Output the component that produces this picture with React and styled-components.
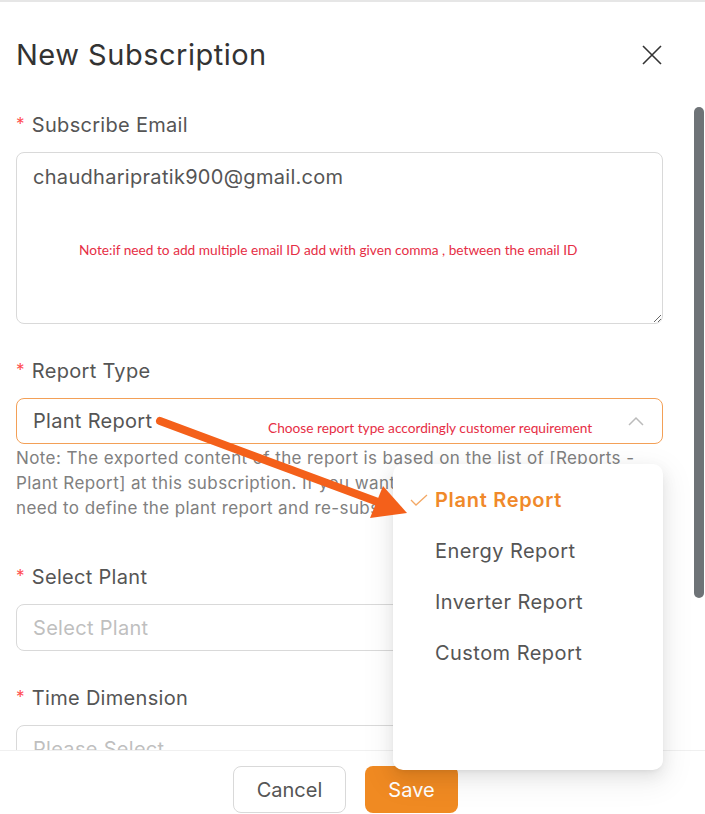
import React from "react";
import styled, { createGlobalStyle } from "styled-components";

const GlobalStyle = createGlobalStyle`
  html, body { margin: 0; padding: 0; background: #fff; }
  body { font-family: Inter, "Noto Sans", sans-serif; letter-spacing: 0.3px; }
  * { box-sizing: border-box; }
`;

const Drawer = styled.div`
  position: relative;
  width: 705px;
  height: 814px;
  overflow: hidden;
  display: flex;
  flex-direction: column;
  border-top: 2px solid #e6e6e6;
  background: #fff;
`;

const Header = styled.div`
  display: flex;
  align-items: center;
  justify-content: space-between;
  padding: 35px 43px 0 16px;
`;

const Title = styled.h2`
  margin: 0;
  font-size: 29px;
  line-height: 36px;
  font-weight: 400;
  letter-spacing: 0.5px;
  color: #333;
`;

const CloseButton = styled.button`
  border: none;
  background: none;
  padding: 0;
  width: 20px;
  height: 20px;
  display: flex;
  cursor: pointer;
`;

const Body = styled.div`
  flex: 1;
  overflow: hidden;
  padding: 37px 42px 0 16px;
`;

const Field = styled.div`
  margin-bottom: ${(p) => p.$gap || 32}px;
`;

const Label = styled.div`
  font-size: 20px;
  line-height: 28px;
  color: #555;
  margin-bottom: 13px;
`;

const Required = styled.span`
  color: #ff4d4f;
  font-size: 17px;
  margin-right: 7px;
  vertical-align: 2px;
`;

const Control = styled.div`
  position: relative;
`;

const TextArea = styled.textarea`
  display: block;
  width: 100%;
  height: 172px;
  border: 1px solid #d9d9d9;
  border-radius: 8px;
  padding: 10px 16px;
  font-family: Inter, "Noto Sans", sans-serif;
  font-size: 20px;
  line-height: 28px;
  letter-spacing: 0.3px;
  color: #555;
  resize: both;
  outline: none;
`;

const Annotation = styled.span`
  position: absolute;
  left: ${(p) => p.$left}px;
  top: ${(p) => p.$top}px;
  font-family: Lato, "Open Sans", sans-serif;
  font-size: 13.7px;
  line-height: 16px;
  letter-spacing: 0;
  color: #e62e45;
  white-space: nowrap;
  pointer-events: none;
`;

const Select = styled.div`
  height: ${(p) => p.$height || 46}px;
  border: 1px solid ${(p) => (p.$open ? "#f3a057" : "#d9d9d9")};
  border-radius: 8px;
  display: flex;
  align-items: center;
  justify-content: space-between;
  padding: 0 18px 0 16px;
  font-size: 20px;
  color: ${(p) => (p.$placeholder ? "#bfbfbf" : "#555")};
`;

const Hint = styled.p`
  margin: 2px 0 0;
  font-size: 17px;
  line-height: 25px;
  letter-spacing: 0.4px;
  color: #808080;
  white-space: nowrap;
`;

const Footer = styled.div`
  height: 64px;
  flex-shrink: 0;
  border-top: 1px solid #f0f0f0;
  display: flex;
  justify-content: center;
  gap: 19px;
  padding: 15px 14px 0 0;
`;

const Button = styled.button`
  width: ${(p) => p.$width}px;
  height: 47px;
  border-radius: 8px;
  font-family: Inter, "Noto Sans", sans-serif;
  font-size: 20px;
  cursor: pointer;
  border: ${(p) => (p.$primary ? "none" : "1px solid #d9d9d9")};
  background: ${(p) => (p.$primary ? "#f08a22" : "#fff")};
  color: ${(p) => (p.$primary ? "#fff" : "#555")};
`;

const Dropdown = styled.ul`
  position: absolute;
  left: 393px;
  top: 462px;
  width: 270px;
  height: 306px;
  margin: 0;
  padding: 10px 0;
  list-style: none;
  background: #fff;
  border-radius: 10px;
  box-shadow: 0 6px 16px rgba(0, 0, 0, 0.08), 0 3px 6px -4px rgba(0, 0, 0, 0.12),
    0 9px 28px 8px rgba(0, 0, 0, 0.05);
  z-index: 2;
`;

const Option = styled.li`
  height: 51px;
  display: flex;
  align-items: center;
  padding-left: 17px;
  font-size: 20px;
  color: ${(p) => (p.$selected ? "#f0892a" : "#555")};
  font-weight: ${(p) => (p.$selected ? 600 : 400)};
  letter-spacing: ${(p) => (p.$selected ? 0.7 : 0.45)}px;
`;

const CheckSlot = styled.span`
  width: 25px;
  display: flex;
  align-items: center;
`;

const ScrollThumb = styled.div`
  position: absolute;
  right: 1px;
  top: 105px;
  width: 10px;
  height: 491px;
  border-radius: 5px;
  background: #6e7377;
`;

const ArrowLayer = styled.svg`
  position: absolute;
  left: 0;
  top: -2px;
  pointer-events: none;
  z-index: 3;
`;

const options = ["Plant Report", "Energy Report", "Inverter Report", "Custom Report"];

export default function App() {
  return (
    <>
      <GlobalStyle />
      <Drawer>
        <Header>
          <Title>New Subscription</Title>
          <CloseButton aria-label="close">
            <svg width="20" height="20" viewBox="0 0 20 20">
              <path d="M1 1 L19 19 M19 1 L1 19" stroke="#333" strokeWidth="1.6" />
            </svg>
          </CloseButton>
        </Header>

        <Body>
          <Field>
            <Label>
              <Required>*</Required>Subscribe Email
            </Label>
            <Control>
              <TextArea readOnly defaultValue="chaudharipratik900@gmail.com" />
              <Annotation $left={63} $top={90}>
                Note:if need to add multiple email ID add with given comma , between the email ID
              </Annotation>
            </Control>
          </Field>

          <Field $gap={41}>
            <Label>
              <Required>*</Required>Report Type
            </Label>
            <Control>
              <Select $open>
                <span>Plant Report</span>
                <svg width="16" height="10" viewBox="0 0 16 10">
                  <path d="M1 9 L8 2 L15 9" fill="none" stroke="#bbb" strokeWidth="1.5" />
                </svg>
              </Select>
              <Annotation $left={252} $top={22}>
                Choose report type accordingly customer requirement
              </Annotation>
            </Control>
            <Hint>
              Note: The exported content of the report is based on the list of [Reports -
              <br />
              Plant Report] at this subscription. If you want to change the content, you
              <br />
              need to define the plant report and re-subscribe.
            </Hint>
          </Field>

          <Field>
            <Label>
              <Required>*</Required>Select Plant
            </Label>
            <Select $placeholder $height={47}>Select Plant</Select>
          </Field>

          <Field>
            <Label>
              <Required>*</Required>Time Dimension
            </Label>
            <Select $placeholder $height={47}>Please Select</Select>
          </Field>
        </Body>

        <Footer>
          <Button $width={113}>Cancel</Button>
          <Button $width={93} $primary>
            Save
          </Button>
        </Footer>

        <Dropdown>
          {options.map((o, i) => (
            <Option key={o} $selected={i === 0}>
              <CheckSlot>
                {i === 0 && (
                  <svg width="18" height="12" viewBox="0 0 18 12">
                    <path d="M1 6 L6 11 L17 1" fill="none" stroke="#f3a865" strokeWidth="1.3" />
                  </svg>
                )}
              </CheckSlot>
              {o}
            </Option>
          ))}
        </Dropdown>

        <ScrollThumb />

        <ArrowLayer width="705" height="814" viewBox="0 0 705 814">
          <line x1="160" y1="421" x2="378" y2="502" stroke="#f4601a" strokeWidth="8" strokeLinecap="round" />
          <polygon points="407,513 370,518 383,486" fill="#f4601a" />
        </ArrowLayer>
      </Drawer>
    </>
  );
}
